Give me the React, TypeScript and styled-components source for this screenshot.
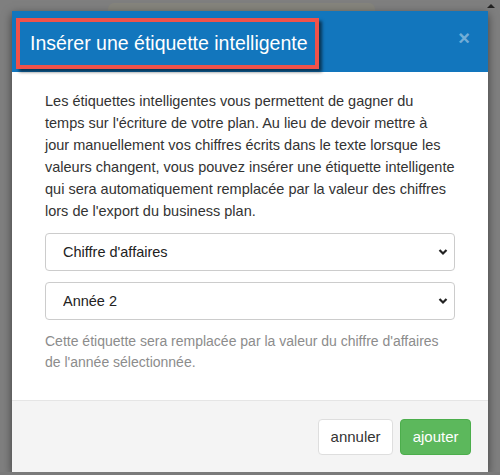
import React from "react";
import styled, { createGlobalStyle } from "styled-components";

const GlobalStyle = createGlobalStyle`
	html, body {
		margin: 0;
		padding: 0;
		background: #7f7f7f;
		font-family: "Liberation Sans", Arial, sans-serif;
	}
`;

const Backdrop = styled.div`
	width: 500px;
	height: 475px;
	overflow: hidden;
	background: #7f7f7f;
	display: flex;
	flex-direction: column;
	align-items: flex-start;
`;

const TopStrip = styled.div`
	height: 12px;
	width: 100%;
	display: flex;
	align-items: flex-end;
	justify-content: space-between;
`;

const BehindTab = styled.div`
	margin-left: 108px;
	width: 267px;
	height: 8px;
	background: #85847c;
	border-radius: 6px 6px 0 0;
`;

const ScrollArrow = styled.div`
	width: 0;
	height: 0;
	margin: 0 5px 3px 0;
	border-left: 4px solid transparent;
	border-right: 4px solid transparent;
	border-bottom: 4px solid #222;
`;

const Modal = styled.div`
	margin-left: 12px;
	width: 476px;
	background: #fff;
	box-shadow: 0 3px 9px rgba(0, 0, 0, 0.5);
	display: flex;
	flex-direction: column;
`;

const Header = styled.div`
	height: 61px;
	box-sizing: border-box;
	background: #1276bd;
	padding: 7px 18px 0 4px;
	display: flex;
	align-items: flex-start;
	justify-content: space-between;
`;

const Highlight = styled.div`
	border: 4px solid #f0524a;
	box-shadow: 3px 3px 3px rgba(0, 0, 0, 0.55);
	padding: 9px 7px 0 10px;
	height: 34px;
`;

const Title = styled.h4`
	margin: 0;
	color: #fff;
	font-size: 19.5px;
	font-weight: 400;
	line-height: 24px;
	white-space: nowrap;
`;

const Close = styled.button`
	margin-top: 12px;
	border: 0;
	padding: 0;
	background: none;
	color: rgba(255, 255, 255, 0.42);
	font-family: "Liberation Sans", Arial, sans-serif;
	font-size: 20px;
	font-weight: 700;
	line-height: 16px;
	cursor: pointer;
`;

const Body = styled.div`
	padding: 18px 33px 27px 33px;
	display: flex;
	flex-direction: column;
	gap: 11px;
	border-bottom: 1px solid #e5e5e5;
`;

const Intro = styled.p`
	margin: 0;
	color: #333;
	font-size: 14.5px;
	line-height: 22px;
`;

const SelectWrap = styled.div`
	position: relative;
	height: 38px;
`;

const Select = styled.select`
	appearance: none;
	width: 100%;
	height: 38px;
	box-sizing: border-box;
	border: 1px solid #ccc;
	border-radius: 4px;
	background: #fff;
	padding: 0 30px 0 17px;
	color: #222;
	font-family: "Liberation Sans", Arial, sans-serif;
	font-size: 14.5px;
	outline: none;
`;

const Chevron = styled.svg`
	position: absolute;
	right: 7px;
	top: 15px;
	pointer-events: none;
`;

const Help = styled.p`
	margin: 0;
	color: #8c8c8c;
	font-size: 14px;
	line-height: 21px;
`;

const Footer = styled.div`
	background: #f4f4f4;
	padding: 18px 17px 17px;
	display: flex;
	justify-content: flex-end;
	gap: 7px;
`;

const Button = styled.button<{ $primary?: boolean }>`
	height: 36px;
	padding: 0 11.5px;
	border-radius: 4px;
	border: 1px solid ${(p) => (p.$primary ? "#4cae4c" : "#dedede")};
	background: ${(p) => (p.$primary ? "#5cb85c" : "#fff")};
	color: ${(p) => (p.$primary ? "#fff" : "#333")};
	font-family: "Liberation Sans", Arial, sans-serif;
	font-size: 15px;
	cursor: pointer;
`;

const BottomStrip = styled.div`
	height: 4px;
	width: 100%;
	background: #7a7a7a;
`;

const ChevronIcon = () => (
	<Chevron width="10" height="8" viewBox="0 0 10 8">
		<path d="M1.5 2 L5 5.5 L8.5 2" fill="none" stroke="#222" strokeWidth="2.2" />
	</Chevron>
);

const App = () => {
	return (
		<>
			<GlobalStyle />
			<Backdrop>
				<TopStrip>
					<BehindTab />
					<ScrollArrow />
				</TopStrip>
				<Modal>
					<Header>
						<Highlight>
							<Title>Insérer une étiquette intelligente</Title>
						</Highlight>
						<Close aria-label="Fermer">×</Close>
					</Header>
					<Body>
						<Intro>
							Les étiquettes intelligentes vous permettent de gagner du temps sur l'écriture de votre plan. Au
							lieu de devoir mettre à jour manuellement vos chiffres écrits dans le texte lorsque les valeurs
							changent, vous pouvez insérer une étiquette intelligente qui sera automatiquement remplacée par
							la valeur des chiffres lors de l'export du business plan.
						</Intro>
						<SelectWrap>
							<Select defaultValue="ca">
								<option value="ca">Chiffre d'affaires</option>
							</Select>
							<ChevronIcon />
						</SelectWrap>
						<SelectWrap>
							<Select defaultValue="2">
								<option value="2">Année 2</option>
							</Select>
							<ChevronIcon />
						</SelectWrap>
						<Help>
							Cette étiquette sera remplacée par la valeur du chiffre d'affaires de l'année sélectionnée.
						</Help>
					</Body>
					<Footer>
						<Button>annuler</Button>
						<Button $primary>ajouter</Button>
					</Footer>
				</Modal>
				<BottomStrip />
			</Backdrop>
		</>
	);
};

export default App;
